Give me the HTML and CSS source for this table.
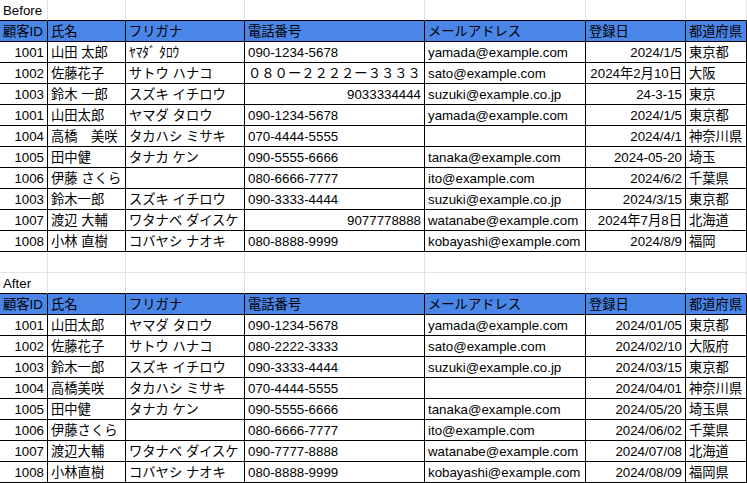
FILE: index.html
```html
<!DOCTYPE html>
<html lang="ja">
<head>
<meta charset="utf-8">
<title>顧客データ Before / After</title>
<link rel="stylesheet" href="styles.css">
</head>
<body>
<div class="sheet">
  <div class="row label"><div class="c">Before</div><div class="c"></div><div class="c"></div><div class="c"></div><div class="c"></div><div class="c"></div><div class="c"></div></div>
  <div class="row head"><div class="c">顧客ID</div><div class="c">氏名</div><div class="c">フリガナ</div><div class="c">電話番号</div><div class="c">メールアドレス</div><div class="c">登録日</div><div class="c">都道府県</div></div>
  <div class="row data"><div class="c r">1001</div><div class="c">山田 太郎</div><div class="c">ﾔﾏﾀﾞ ﾀﾛｳ</div><div class="c">090-1234-5678</div><div class="c">yamada@example.com</div><div class="c r">2024/1/5</div><div class="c">東京都</div></div>
  <div class="row data"><div class="c r">1002</div><div class="c">佐藤花子</div><div class="c">サトウ ハナコ</div><div class="c">０８０ー２２２２ー３３３３</div><div class="c">sato@example.com</div><div class="c r">2024年2月10日</div><div class="c">大阪</div></div>
  <div class="row data"><div class="c r">1003</div><div class="c">鈴木 一郎</div><div class="c">スズキ イチロウ</div><div class="c r">9033334444</div><div class="c">suzuki@example.co.jp</div><div class="c r">24-3-15</div><div class="c">東京</div></div>
  <div class="row data"><div class="c r">1001</div><div class="c">山田太郎</div><div class="c">ヤマダ タロウ</div><div class="c">090-1234-5678</div><div class="c">yamada@example.com</div><div class="c r">2024/1/5</div><div class="c">東京都</div></div>
  <div class="row data"><div class="c r">1004</div><div class="c">高橋　美咲</div><div class="c">タカハシ ミサキ</div><div class="c">070-4444-5555</div><div class="c"></div><div class="c r">2024/4/1</div><div class="c">神奈川県</div></div>
  <div class="row data"><div class="c r">1005</div><div class="c">田中健</div><div class="c">タナカ ケン</div><div class="c">090-5555-6666</div><div class="c">tanaka@example.com</div><div class="c r">2024-05-20</div><div class="c">埼玉</div></div>
  <div class="row data"><div class="c r">1006</div><div class="c">伊藤 さくら</div><div class="c"></div><div class="c">080-6666-7777</div><div class="c">ito@example.com</div><div class="c r">2024/6/2</div><div class="c">千葉県</div></div>
  <div class="row data"><div class="c r">1003</div><div class="c">鈴木一郎</div><div class="c">スズキ イチロウ</div><div class="c">090-3333-4444</div><div class="c">suzuki@example.co.jp</div><div class="c r">2024/3/15</div><div class="c">東京都</div></div>
  <div class="row data"><div class="c r">1007</div><div class="c">渡辺 大輔</div><div class="c">ワタナベ ダイスケ</div><div class="c r">9077778888</div><div class="c">watanabe@example.com</div><div class="c r">2024年7月8日</div><div class="c">北海道</div></div>
  <div class="row data"><div class="c r">1008</div><div class="c">小林 直樹</div><div class="c">コバヤシ ナオキ</div><div class="c">080-8888-9999</div><div class="c">kobayashi@example.com</div><div class="c r">2024/8/9</div><div class="c">福岡</div></div>
  <div class="row empty"><div class="c"></div><div class="c"></div><div class="c"></div><div class="c"></div><div class="c"></div><div class="c"></div><div class="c"></div></div>
  <div class="row label"><div class="c">After</div><div class="c"></div><div class="c"></div><div class="c"></div><div class="c"></div><div class="c"></div><div class="c"></div></div>
  <div class="row head"><div class="c">顧客ID</div><div class="c">氏名</div><div class="c">フリガナ</div><div class="c">電話番号</div><div class="c">メールアドレス</div><div class="c">登録日</div><div class="c">都道府県</div></div>
  <div class="row data"><div class="c r">1001</div><div class="c">山田太郎</div><div class="c">ヤマダ タロウ</div><div class="c">090-1234-5678</div><div class="c">yamada@example.com</div><div class="c r">2024/01/05</div><div class="c">東京都</div></div>
  <div class="row data"><div class="c r">1002</div><div class="c">佐藤花子</div><div class="c">サトウ ハナコ</div><div class="c">080-2222-3333</div><div class="c">sato@example.com</div><div class="c r">2024/02/10</div><div class="c">大阪府</div></div>
  <div class="row data"><div class="c r">1003</div><div class="c">鈴木一郎</div><div class="c">スズキ イチロウ</div><div class="c">090-3333-4444</div><div class="c">suzuki@example.co.jp</div><div class="c r">2024/03/15</div><div class="c">東京都</div></div>
  <div class="row data"><div class="c r">1004</div><div class="c">高橋美咲</div><div class="c">タカハシ ミサキ</div><div class="c">070-4444-5555</div><div class="c"></div><div class="c r">2024/04/01</div><div class="c">神奈川県</div></div>
  <div class="row data"><div class="c r">1005</div><div class="c">田中健</div><div class="c">タナカ ケン</div><div class="c">090-5555-6666</div><div class="c">tanaka@example.com</div><div class="c r">2024/05/20</div><div class="c">埼玉県</div></div>
  <div class="row data"><div class="c r">1006</div><div class="c">伊藤さくら</div><div class="c"></div><div class="c">080-6666-7777</div><div class="c">ito@example.com</div><div class="c r">2024/06/02</div><div class="c">千葉県</div></div>
  <div class="row data"><div class="c r">1007</div><div class="c">渡辺大輔</div><div class="c">ワタナベ ダイスケ</div><div class="c">090-7777-8888</div><div class="c">watanabe@example.com</div><div class="c r">2024/07/08</div><div class="c">北海道</div></div>
  <div class="row data"><div class="c r">1008</div><div class="c">小林直樹</div><div class="c">コバヤシ ナオキ</div><div class="c">080-8888-9999</div><div class="c">kobayashi@example.com</div><div class="c r">2024/08/09</div><div class="c">福岡県</div></div>
</div>
</body>
</html>
```

FILE: styles.css
```css
html, body {
  margin: 0;
  padding: 0;
  background: #ffffff;
}

body {
  font-family: "Liberation Sans", Arial, "Noto Sans CJK JP", sans-serif;
  font-size: 13.3px;
  color: #000000;
  width: 747px;
  height: 483px;
  overflow: hidden;
}

.sheet {
  display: flex;
  flex-direction: column;
}

.row {
  display: grid;
  grid-template-columns: 48px 78px 119px 180px 161px 100px 61px;
  height: 21px;
}

.c {
  box-sizing: border-box;
  height: 21px;
  padding: 0 3px 2px 3px;
  line-height: 15px;
  display: flex;
  align-items: flex-end;
  justify-content: flex-start;
  white-space: nowrap;
  border-right: 1px solid #e2e3e3;
  border-bottom: 1px solid #e2e3e3;
}

.c.r {
  justify-content: flex-end;
}

.label .c {
  border-bottom-color: #000000;
}

.head .c,
.data .c {
  border-right-color: #000000;
  border-bottom-color: #000000;
}

.head .c {
  background: #4a86e8;
}
```
